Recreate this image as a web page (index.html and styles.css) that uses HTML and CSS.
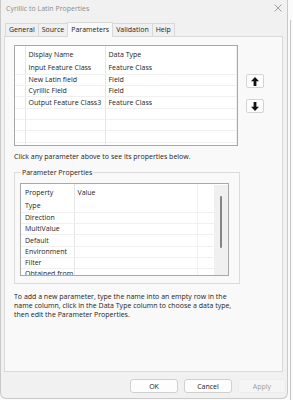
FILE: index.html
```html
<!DOCTYPE html>
<html lang="en">
<head>
    <meta charset="UTF-8">
    <title>Cyrillic to Latin Properties</title>
    <link rel="stylesheet" href="styles.css">
</head>
<body>
    <div class="screen">
        <div class="window">
            <div class="titlebar">
                <span class="title">Cyrillic to Latin Properties</span>
                <svg class="close" width="8" height="8" viewBox="0 0 8 8">
                    <path d="M0.5 0.5 L7.5 7.5 M7.5 0.5 L0.5 7.5" stroke="#8a8a8a" stroke-width="0.8" fill="none"/>
                </svg>
            </div>
            <div class="tabs">
                <span class="tab">General</span>
                <span class="tab">Source</span>
                <span class="tab active">Parameters</span>
                <span class="tab">Validation</span>
                <span class="tab">Help</span>
            </div>
            <div class="panel">
                <div class="params">
                    <div class="grid grid-params">
                        <table>
                            <tr class="head"><td class="rh"></td><td class="c1">Display Name</td><td>Data Type</td></tr>
                            <tr><td class="rh"></td><td class="c1">Input Feature Class</td><td>Feature Class</td></tr>
                            <tr><td class="rh"></td><td class="c1">New Latin field</td><td>Field</td></tr>
                            <tr><td class="rh"></td><td class="c1">Cyrillic Field</td><td>Field</td></tr>
                            <tr><td class="rh"></td><td class="c1">Output Feature Class3</td><td>Feature Class</td></tr>
                            <tr><td class="rh"></td><td class="c1"></td><td></td></tr>
                            <tr><td class="rh"></td><td class="c1"></td><td></td></tr>
                            <tr><td class="rh"></td><td class="c1"></td><td></td></tr>
                            <tr><td class="rh"></td><td class="c1"></td><td></td></tr>
                        </table>
                    </div>
                    <div class="movers">
                        <button class="mover">
                            <svg width="8" height="9" viewBox="0 0 8 9"><path d="M4 0 L8 4.2 H5.4 V9 H2.6 V4.2 H0 Z" fill="#111"/></svg>
                        </button>
                        <button class="mover">
                            <svg width="8" height="9" viewBox="0 0 8 9"><path d="M4 9 L8 4.8 H5.4 V0 H2.6 V4.8 H0 Z" fill="#111"/></svg>
                        </button>
                    </div>
                </div>
                <p class="hint">Click any parameter above to see its properties below.</p>
                <div class="group">
                    <span class="group-label">Parameter Properties</span>
                    <div class="grid grid-props">
                        <table>
                            <tr class="head"><td class="c1">Property</td><td class="c2">Value</td><td></td></tr>
                            <tr><td class="c1">Type</td><td class="c2"></td><td></td></tr>
                            <tr><td class="c1">Direction</td><td class="c2"></td><td></td></tr>
                            <tr><td class="c1">MultiValue</td><td class="c2"></td><td></td></tr>
                            <tr><td class="c1">Default</td><td class="c2"></td><td></td></tr>
                            <tr><td class="c1">Environment</td><td class="c2"></td><td></td></tr>
                            <tr><td class="c1">Filter</td><td class="c2"></td><td></td></tr>
                            <tr><td class="c1">Obtained from</td><td class="c2"></td><td></td></tr>
                        </table>
                        <div class="scroll"><span class="thumb"></span></div>
                    </div>
                </div>
                <p class="help">To add a new parameter, type the name into an empty row in the name column, click in the Data Type column to choose a data type, then edit the Parameter Properties.</p>
            </div>
            <div class="actions">
                <button class="btn">OK</button>
                <button class="btn">Cancel</button>
                <button class="btn disabled">Apply</button>
            </div>
        </div>
        <div class="edge"></div>
    </div>
</body>
</html>
```

FILE: styles.css
```css
* {
    margin: 0;
    padding: 0;
    box-sizing: border-box;
}

body {
    background-color: #fbfbfb;
    font-family: "Open Sans", "Noto Sans", sans-serif;
    font-size: 7px;
    color: #1b1b1b;
}

.screen {
    display: flex;
    width: 293px;
    height: 400px;
}

.window {
    display: flex;
    flex-direction: column;
    width: 288px;
    height: 399px;
    border: 1px solid #c9c9c9;
    border-top: none;
    border-radius: 0 0 6px 6px;
    background-color: #f1f1f1;
}

.edge {
    width: 1px;
    height: 380px;
    margin: 20px 0 0 2px;
    background-color: #c4c4c4;
}

.titlebar {
    display: flex;
    align-items: center;
    justify-content: space-between;
    height: 22px;
    padding: 0 5px 6px 5px;
}

.title {
    color: #8c8c8c;
    font-size: 7px;
}

.tabs {
    display: flex;
    align-items: flex-end;
    height: 14px;
    padding-left: 4px;
}

.tab {
    height: 13px;
    line-height: 12px;
    padding: 0 3px;
    margin-right: -1px;
    border: 1px solid #d9d9d9;
    border-bottom: none;
    background-color: #f0f0f0;
}

.tab.active {
    height: 15px;
    line-height: 13px;
    margin-bottom: -1px;
    background-color: #f9f9f9;
    position: relative;
    z-index: 1;
}

.panel {
    height: 336px;
    margin: 0 4px 0 3px;
    padding: 8px 0 0 9px;
    border: 1px solid #d9d9d9;
    background-color: #f9f9f9;
}

.params {
    display: flex;
    gap: 8px;
}

.grid {
    overflow: hidden;
    border: 1px solid #a8a8a8;
    background-color: #fff;
}

.grid table {
    border-collapse: collapse;
    width: 100%;
    table-layout: fixed;
}

.grid td {
    height: 11.3px;
    line-height: 10px;
    padding: 0 3px;
    white-space: nowrap;
    overflow: hidden;
    border-bottom: 1px solid #f0f0f0;
    border-right: 1px solid #f0f0f0;
}

.grid tr.head td {
    height: 17px;
    vertical-align: middle;
    border-bottom: none;
}

.grid-params {
    width: 224px;
    height: 101px;
}

.grid-params .rh {
    width: 10px;
    border-right: 1px solid #e6e6e6;
}

.grid-params .c1 {
    width: 80px;
    border-right: 1px solid #e6e6e6;
}

.movers {
    display: flex;
    flex-direction: column;
    gap: 11px;
    padding-top: 29px;
}

.mover {
    display: flex;
    align-items: center;
    justify-content: center;
    width: 18px;
    height: 14px;
    border: 1px solid #d4d4d4;
    border-radius: 2px;
    background-color: #fdfdfd;
}

.hint {
    margin-top: 6px;
    line-height: 9px;
}

.group {
    width: 226px;
    height: 112px;
    margin-top: 11px;
    padding: 0 10px 0 5px;
    border: 1px solid #dcdcdc;
}

.group-label {
    display: block;
    width: fit-content;
    height: 9px;
    line-height: 9px;
    margin: -5px 0 0 1px;
    padding: 0 1px;
    background-color: #f9f9f9;
}

.grid-props {
    display: flex;
    width: 209px;
    height: 93px;
    margin-top: 6px;
}

.grid-props table {
    flex: 1;
}

.grid-props .c1 {
    width: 53px;
    padding-left: 4px;
    border-right: 1px solid #e6e6e6;
}

.grid-props .c2 {
    width: 123px;
}

.grid-props td:last-child {
    border-right: none;
}

.scroll {
    display: flex;
    justify-content: center;
    width: 14px;
    padding-top: 11px;
    background-color: #f0f0f0;
    border-top: 1px solid #fff;
}

.thumb {
    width: 2px;
    height: 52px;
    border-radius: 1px;
    background-color: #858585;
}

.help {
    width: 219px;
    margin-top: 8px;
    line-height: 9px;
}

.actions {
    display: flex;
    justify-content: flex-end;
    gap: 6px;
    padding: 7px 1px 0 0;
}

.btn {
    width: 48px;
    height: 14px;
    border: 1px solid #d0d0d0;
    border-radius: 3px;
    background-color: #fdfdfd;
    font-family: "Open Sans", "Noto Sans", sans-serif;
    font-size: 7px;
    color: #1b1b1b;
}

.btn.disabled {
    border-color: #ececec;
    background-color: #f5f5f5;
    color: #9d9d9d;
}
```
